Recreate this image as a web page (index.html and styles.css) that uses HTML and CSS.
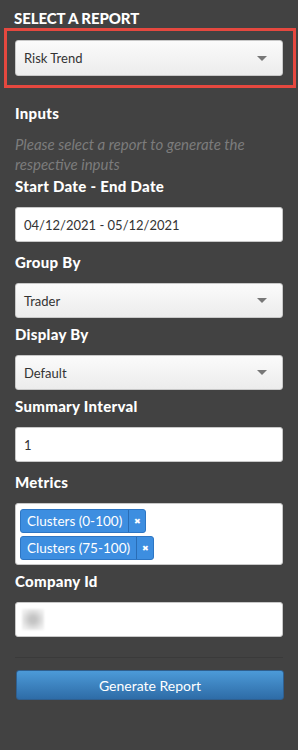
FILE: index.html
```html
<!DOCTYPE html>
<html lang="en">
<head>
    <meta charset="UTF-8">
    <meta name="viewport" content="width=device-width, initial-scale=1.0">
    <title>Reports</title>
    <link rel="stylesheet" href="styles.css">
</head>
<body>
    <div class="panel">
        <h2 class="panel-title">Select a Report</h2>
        <div class="report-box">
            <div class="select-box">
                <span>Risk Trend</span>
                <span class="caret"></span>
            </div>
        </div>

        <h3 class="group-label inputs-label">Inputs</h3>
        <p class="hint">Please select a report to generate the respective inputs</p>

        <div class="form-group">
            <label class="group-label">Start Date - End Date</label>
            <div class="text-box">04/12/2021 - 05/12/2021</div>
        </div>

        <div class="form-group">
            <label class="group-label">Group By</label>
            <div class="select-box">
                <span>Trader</span>
                <span class="caret"></span>
            </div>
        </div>

        <div class="form-group">
            <label class="group-label">Display By</label>
            <div class="select-box">
                <span>Default</span>
                <span class="caret"></span>
            </div>
        </div>

        <div class="form-group">
            <label class="group-label">Summary Interval</label>
            <div class="text-box">1</div>
        </div>

        <div class="form-group">
            <label class="group-label">Metrics</label>
            <div class="multi-box">
                <span class="tag"><span class="tag-text">Clusters (0-100)</span><span class="tag-x">&#x2716;</span></span>
                <span class="tag"><span class="tag-text">Clusters (75-100)</span><span class="tag-x">&#x2716;</span></span>
            </div>
        </div>

        <div class="form-group">
            <label class="group-label">Company Id</label>
            <div class="text-box"><span class="blurred"></span></div>
        </div>

        <hr class="divider">
        <button class="generate-btn">Generate Report</button>
    </div>
</body>
</html>
```

FILE: styles.css
```css
body {
    margin: 0;
    background: #424242;
    font-family: Lato, "Open Sans", sans-serif;
    color: #fff;
}

.panel {
    padding: 8px 15px 40px;
}

.panel-title {
    margin: 0 0 0 -1px;
    font-size: 15px;
    line-height: 20px;
    font-weight: 900;
    text-transform: uppercase;
    letter-spacing: -0.1px;
}

.report-box {
    margin: 0 -13px 0 -11px;
    border: 3px solid #e5483f;
    padding: 9px 10px 9px 8px;
}

.group-label {
    display: block;
    margin: 0 0 11px;
    font-size: 15px;
    line-height: 20px;
    font-weight: 900;
    letter-spacing: 0.3px;
}

.inputs-label {
    margin: 15px 0 0;
}

.hint {
    margin: 11px 0 2px;
    font-size: 15px;
    line-height: 20px;
    font-style: italic;
    color: #7c7c7c;
}

.select-box,
.text-box,
.multi-box {
    box-sizing: border-box;
    border: 1px solid #c8c8c8;
    border-radius: 3px;
    color: #333;
    font-size: 13px;
}

.select-box {
    display: flex;
    align-items: center;
    justify-content: space-between;
    height: 35px;
    margin-bottom: 6px;
    padding: 0 15px 0 8px;
    background: linear-gradient(#fbfbfb, #ececec);
}

.report-box .select-box {
    height: 36px;
    margin-bottom: 0;
}

.caret {
    width: 0;
    height: 0;
    border-left: 5px solid transparent;
    border-right: 5px solid transparent;
    border-top: 5px solid #777;
}

.text-box {
    display: flex;
    align-items: center;
    height: 35px;
    margin-bottom: 10px;
    padding: 0 8px;
    background: #fff;
}

.blurred {
    width: 22px;
    height: 21px;
    margin-left: -2px;
    background: radial-gradient(#c4c4c4 20%, #eaeaea 70%, #f6f6f6);
    filter: blur(1px);
}

.multi-box {
    display: flex;
    flex-direction: column;
    align-items: flex-start;
    gap: 3px;
    margin-bottom: 6px;
    padding: 5px 4px 4px;
    background: #fff;
}

.tag {
    display: flex;
    height: 24px;
    box-sizing: border-box;
    border: 1px solid #2d76c4;
    border-radius: 3px;
    background: #3d8ee0;
    color: #fff;
    font-size: 13.5px;
}

.tag-text {
    display: flex;
    align-items: center;
    padding: 0 6px;
    border-right: 1px solid #2a6db5;
}

.tag-x {
    display: flex;
    align-items: center;
    justify-content: center;
    width: 16px;
    font-size: 8px;
}

.divider {
    margin: 20px 0 12px;
    border: 0;
    border-top: 1px solid #3a3a3a;
}

.generate-btn {
    display: block;
    width: 268px;
    height: 30px;
    margin-left: 1px;
    border: 1px solid #2f5f8f;
    border-radius: 3px;
    background: linear-gradient(#4c9ad8, #2e6ca7);
    color: #fff;
    font-family: Lato, "Open Sans", sans-serif;
    font-size: 14px;
    cursor: pointer;
}
```
